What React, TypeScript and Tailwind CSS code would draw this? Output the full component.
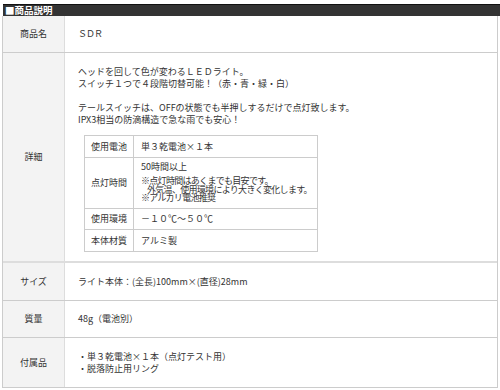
import type { ReactNode } from "react"

type Spec = { label: string; height: string; value: ReactNode }

const specs: Spec[] = [
  {
    label: "使用電池",
    height: "h-[22px]",
    value: <div className="flex h-full items-center">単３乾電池×１本</div>,
  },
  {
    label: "点灯時間",
    height: "h-[51px]",
    value: (
      <div className="pt-[3px]">
        <p className="leading-[12px]">50時間以上</p>
        <div className="mt-[4px] text-[9px] leading-[8.5px] tracking-[-0.7px]">
          <p>※点灯時間はあくまでも目安です。</p>
          <p className="pl-[6px]">外気温、使用環境により大きく変化します。</p>
          <p>※アルカリ電池推奨</p>
        </div>
      </div>
    ),
  },
  {
    label: "使用環境",
    height: "h-[21px]",
    value: <div className="flex h-full items-center">－１０℃～５０℃</div>,
  },
  {
    label: "本体材質",
    height: "h-[21px]",
    value: <div className="flex h-full items-center">アルミ製</div>,
  },
]

export default function App() {
  return (
    <div className="h-[390px] w-[500px] overflow-hidden bg-white pt-[4px] font-['Noto_Sans_CJK_JP','Noto_Sans',sans-serif] text-[9px] text-[#333]">
      <div className="ml-[3px] h-[12px] border-t border-[#111] bg-[#333] pl-[2px] text-[9.5px] leading-[11px] font-bold text-white">
        ■商品説明
      </div>
      <div className="ml-[2px] w-[496px] border-x border-[#ccc]">
        <Row label="商品名" height="h-[37px]">
          <div className="flex h-full items-center tracking-[-1px]">ＳＤＲ</div>
        </Row>
        <Row label="詳細" height="h-[210px]" border="border-b-2 border-[#ddd]">
          <div className="pt-[13px] leading-[12px]">
            <p>ヘッドを回して色が変わるＬＥＤライト。</p>
            <p>スイッチ１つで４段階切替可能！（赤・青・緑・白）</p>
            <p>&nbsp;</p>
            <p>テールスイッチは、OFFの状態でも半押しするだけで点灯致します。</p>
            <p>IPX3相当の防滴構造で急な雨でも安心！</p>
            <SpecTable />
          </div>
        </Row>
        <Row label="サイズ" height="h-[38px]">
          <div className="flex h-full items-center">ライト本体：(全長)100mm×(直径)28mm</div>
        </Row>
        <Row label="質量" height="h-[37px]">
          <div className="flex h-full items-center">48g（電池別）</div>
        </Row>
        <Row label="付属品" height="h-[50px]">
          <div className="flex h-full flex-col justify-center leading-[12px]">
            <p>・単３乾電池×１本（点灯テスト用）</p>
            <p>・脱落防止用リング</p>
          </div>
        </Row>
      </div>
    </div>
  )
}

function Row({
  label,
  height,
  border = "border-b border-[#ccc]",
  children,
}: {
  label: string
  height: string
  border?: string
  children: ReactNode
}) {
  return (
    <div className={`flex ${height} ${border}`}>
      <div className="flex w-[62px] shrink-0 items-center justify-center border-r border-[#ddd] bg-[#f3f3f3]">
        {label}
      </div>
      <div className="flex-1 pl-[13px]">{children}</div>
    </div>
  )
}

// nested spec sheet inside the 詳細 row
function SpecTable() {
  return (
    <div className="mt-[9px] ml-[6px] w-[234px] border border-[#ccc]">
      {specs.map((s, i) => (
        <div
          key={s.label}
          className={`flex ${s.height} ${i < specs.length - 1 ? "border-b border-[#ccc]" : ""}`}
        >
          <div className="flex w-[49px] shrink-0 items-center justify-center border-r border-[#ccc]">
            {s.label}
          </div>
          <div className="flex-1 pl-[7px]">{s.value}</div>
        </div>
      ))}
    </div>
  )
}
